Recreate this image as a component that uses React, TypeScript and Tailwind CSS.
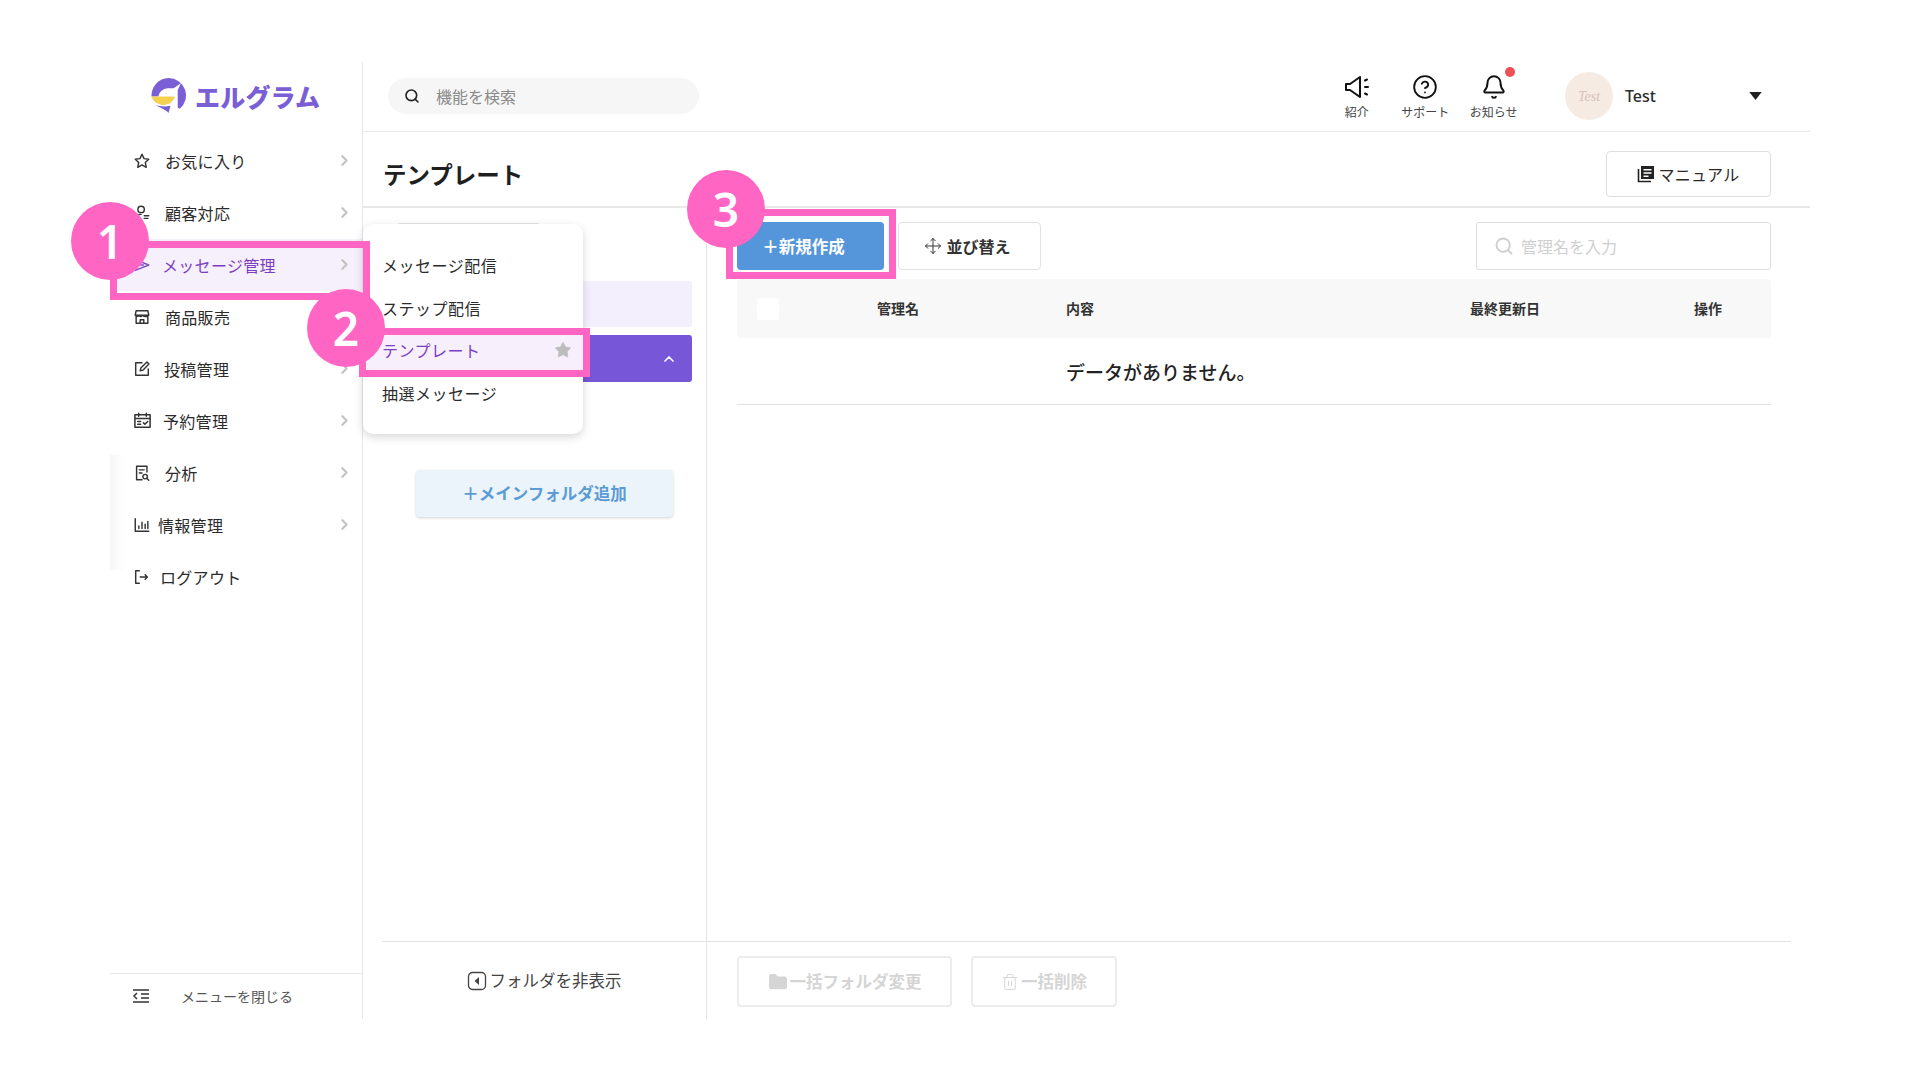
import React from "react";
import { ChevronRight, ChevronUp, Search, CircleHelp, Bell, Star, Move, Folder, Trash2 } from "lucide-react";

const P = { fill: "none", stroke: "currentColor", strokeWidth: 1.6, strokeLinecap: "round" as const, strokeLinejoin: "round" as const };

function Ic({ children, s = 18 }: { children: React.ReactNode; s?: number }) {
  return (
    <svg width={s} height={s} viewBox="0 0 20 20" {...P}>
      {children}
    </svg>
  );
}

const rows: { label: string; ml: string; icon: React.ReactNode; active?: boolean }[] = [
  { label: "お気に入り", ml: "ml-[13px]", icon: <Ic><path d="M10 2.500l2.300 4.900 5.200.7-3.800 3.600 1 5.300L10 14.400 5.300 17l1-5.300L2.500 8.100l5.200-.7z" /></Ic> },
  { label: "顧客対応", ml: "ml-[13px]", icon: <Ic><circle cx="9" cy="6" r="3.600" /><path d="M3.500 17c0-3.500 2.400-5.500 5.500-5.500M12.500 13h5M12.500 16h4" /></Ic> },
  { label: "メッセージ管理", ml: "ml-[10px]", active: true, icon: <Ic><path d="M2.500 4l15 6-15 6 3-6zM5.500 10h6" /></Ic> },
  { label: "商品販売", ml: "ml-[13px]", icon: <Ic><path d="M3.500 3h13l1 5h-15zM3.500 8v9h13V8M2.500 8c1 2 3 2 4 0 1 2 3 2 4 0 1 2 5 2 6.500 0M8 17v-4h4v4" /></Ic> },
  { label: "投稿管理", ml: "ml-[12px]", icon: <Ic><path d="M17 10v7H3V3h7M8 12l.7-3L15.500 2.300l2.200 2.200L11 11.300z" /></Ic> },
  { label: "予約管理", ml: "ml-[11px]", icon: <Ic s={19}><path d="M2 4h16v13H2zM6 2.500v3M14 2.500v3M2 8h16M5 11h3M5 14h3M11 12.500l1.500 1.500 3-3" /></Ic> },
  { label: "分析", ml: "ml-[13px]", icon: <Ic><path d="M15.500 9V2.500H4v15h6M7 6.500h5.500M7 10h3" /><circle cx="13.500" cy="14" r="2.500" /><path d="M15.500 16l2 2" /></Ic> },
  { label: "情報管理", ml: "ml-[6px]", icon: <Ic><path d="M2.500 3v14h15M6.500 14v-3M10 14V7M13.500 14v-5M16.500 14V6" /></Ic> },
  { label: "ログアウト", ml: "ml-[8px]", icon: <Ic><path d="M7 3H3v14h4M8 10h8M13.500 7.500L16 10l-2.500 2.500" /></Ic> },
];

function Num({ n, cls }: { n: string; cls: string }) {
  return (
    <div className={`absolute z-30 w-[78px] h-[78px] rounded-full bg-[#ff66c4] text-white flex items-center justify-center text-[46px] font-semibold font-['Noto_Sans',sans-serif] ${cls}`}>
      {n}
    </div>
  );
}

export default function App() {
  return (
    <div className="relative w-[1920px] h-[1080px] overflow-hidden bg-white pt-[62px] pl-[110px] text-[#2b2b2b] font-['Noto_Sans_CJK_JP','Noto_Sans',sans-serif]">
      <div className="flex h-[957px] w-[1700px]">
        {/* sidebar */}
        <aside className="w-[253px] shrink-0 border-r border-[#e8e8e8] flex flex-col">
          <div className="h-[72.700px] flex items-center pl-[40px] pb-[4px]">
            <svg width="38" height="38" viewBox="7 9 37 37">
              <path fill="#7a5ed6" d="M25 10a17 17 0 0 1 11 30l-2-1V22l3-7-7 5h-6a10 10 0 0 0-9 8H8.500A17 17 0 0 1 25 10z" />
              <path fill="#7a5ed6" d="M12 36c4 3 10 4 13 8l2-7c-5 1-11 1-15-1z" />
              <path fill="#f5cf4e" d="M8.500 28H31c-1 6-8 9-13 8-5-1-8.500-4-9.500-8z" />
            </svg>
            <span className="ml-[7px] text-[25px] font-black text-[#7a5ed6] tracking-[0.2px] leading-none">エルグラム</span>
          </div>
          <nav>
            {rows.map((r) => (
              <div key={r.label} className={`h-[52px] flex items-center pl-[22px] pr-[9px] text-[16px] tracking-[0.3px] ${r.active ? "bg-[#f6effc] text-[#7a3fc0]" : ""}`}>
                <span className={`w-[20px] flex justify-center ${r.active ? "text-[#7a4fc8]" : "text-[#333]"}`}>{r.icon}</span>
                <span className={r.ml}>{r.label}</span>
                {r.label !== "ログアウト" && <ChevronRight size={17} strokeWidth={3} className="ml-auto text-[#c2c2c2]" />}
              </div>
            ))}
          </nav>
          <div className="mt-auto h-[46.500px] border-t border-[#e8e8e8] flex items-center pl-[22px] text-[14px] text-[#555]">
            <svg width="18" height="14" viewBox="0 0 18 14" stroke="#333" strokeWidth="1.500" fill="none">
              <path d="M1 1h16M9 5h8M9 9h8M1 13h16M5 4L2 7l3 3" />
            </svg>
            <span className="ml-[31px]">メニューを閉じる</span>
          </div>
        </aside>

        {/* main */}
        <main className="flex-1 flex flex-col min-w-0">
          <header className="h-[70px] shrink-0 border-b border-[#e8e8e8] flex items-center pl-[25px] pr-[48px] pb-[1px]">
            <div className="w-[311px] h-[36px] rounded-full bg-[#f6f6f6] flex items-center pl-[16px] text-[16px] text-[#8a8a8a]">
              <Search size={16} strokeWidth={2.400} className="text-[#222]" />
              <span className="ml-[16px]">機能を検索</span>
            </div>
            <div className="ml-auto flex items-start">
              <div className="w-[68.500px] flex flex-col items-center text-[12px] text-[#444] leading-none">
                <svg width="28" height="26" viewBox="0 0 28 26" fill="none" stroke="#111" strokeWidth="2" strokeLinejoin="round" strokeLinecap="round">
                  <path d="M3 10v6h4l10 7V3L7 10zM22 6.500l2-1M22 13h3M22 19.500l2 1" />
                </svg>
                <span className="mt-[6px]">紹介</span>
              </div>
              <div className="w-[68.500px] flex flex-col items-center text-[12px] text-[#444] leading-none">
                <CircleHelp size={26} strokeWidth={1.700} className="text-[#111]" />
                <span className="mt-[6px]">サポート</span>
              </div>
              <div className="relative w-[68.500px] flex flex-col items-center text-[12px] text-[#444] leading-none">
                <Bell size={26} strokeWidth={1.800} className="text-[#111]" />
                <span className="mt-[6px]">お知らせ</span>
                <span className="absolute right-[13px] -top-[7px] w-[10px] h-[10px] rounded-full bg-[#ef4f55]" />
              </div>
            </div>
            <div className="ml-[37px] w-[197px] flex items-center">
              <div className="w-[48px] h-[48px] rounded-full bg-[#f5ebe2] flex items-center justify-center text-[14px] italic text-[#d9bfc0] font-['Liberation_Serif',serif]">Test</div>
              <span className="ml-[12px] text-[16px] font-medium font-['Noto_Sans',sans-serif]">Test</span>
              <svg className="ml-auto" width="13" height="8" viewBox="0 0 14 9"><path fill="#222" d="M0 0h14L7 9z" /></svg>
            </div>
          </header>

          <div className="h-[76px] shrink-0 border-b-2 border-[#e8e8e8] flex items-center pl-[20px] pr-[39px] pt-[9px]">
            <h1 className="mt-[3px] text-[23.500px] font-bold text-[#1f1f1f] leading-none">テンプレート</h1>
            <button className="ml-auto w-[165px] h-[46px] rounded-[4px] border border-[#dedede] flex items-center justify-center text-[16px] tracking-[0.3px]">
              <svg width="18" height="18" viewBox="0 0 18 18" fill="none" stroke="#222" strokeWidth="1.600" className="mr-[3px]">
                <path d="M1.500 4v12.500H14" />
                <path fill="#222" stroke="none" d="M4 1h13v13H4zm2.500 3v1.500h8V4zm0 3.200v1.500h8V7.200zm0 3.200v1.500h5v-1.500z" />
              </svg>
              マニュアル
            </button>
          </div>

          <div className="flex-1 flex min-h-0">
            {/* folder column */}
            <section className="w-[344px] shrink-0 border-r border-[#e4e4e4] flex flex-col">
              <div className="flex-1 pl-[19px] pr-[14px] pt-[15px]">
                <div className="ml-[14px] w-[145px] h-[48px] rounded-[4px] border border-[#e2e2e2]" />
                <div className="mt-[10px] h-[46px] rounded-[3px] bg-[#f4effc]" />
                <div className="mt-[8px] h-[47px] rounded-[3px] bg-[#7856d8] flex items-center justify-end pr-[15px] text-white">
                  <ChevronUp size={16} strokeWidth={2.500} />
                </div>
                <button className="mt-[88px] ml-[34px] w-[257px] h-[47px] rounded-[4px] bg-[#ecf4fb] shadow-[0_1px_3px_rgba(0,0,0,0.18)] text-[16.500px] font-bold text-[#5b9bd5]">
                  ＋メインフォルダ追加
                </button>
              </div>
              <div className="ml-[19px] h-[78px] shrink-0 border-t border-[#e2e2e2] flex items-center justify-center text-[16.500px] text-[#444]">
                <svg width="20" height="20" viewBox="0 0 20 20" fill="none" stroke="#444" strokeWidth="1.300" className="mr-[3px]">
                  <rect x="1.500" y="1.500" width="17" height="17" rx="4" />
                  <path fill="#444" stroke="none" d="M12 6v8L7.500 10z" />
                </svg>
                フォルダを非表示
              </div>
            </section>

            {/* list column */}
            <section className="flex-1 min-w-0 flex flex-col">
              <div className="flex-1 pl-[30px] pr-[39px] pt-[14px]">
                <div className="flex items-center">
                  <button className="w-[147px] h-[48px] pr-[14px] rounded-[4px] bg-[#5496d9] text-white text-[16.500px] font-bold">＋新規作成</button>
                  <button className="ml-[14px] w-[143px] h-[48px] pr-[4px] rounded-[4px] border border-[#e2e2e2] flex items-center justify-center text-[16px] font-bold text-[#333]">
                    <Move size={18} strokeWidth={1.300} className="mr-[4px]" />
                    並び替え
                  </button>
                  <div className="ml-auto w-[295px] h-[48px] rounded-[3px] border border-[#dedede] flex items-center pl-[17px] text-[16px] text-[#cfcfcf]">
                    <Search size={20} strokeWidth={2.200} className="text-[#cfcfcf]" />
                    <span className="ml-[7px]">管理名を入力</span>
                  </div>
                </div>
                <div className="mt-[9px] h-[59px] rounded-[4px] bg-[#f8f8f8] grid grid-cols-[140px_189px_404px_224px_1fr] items-center text-[14px] font-bold text-[#333]">
                  <span className="ml-[20px] w-[22px] h-[22px] rounded-[3px] bg-white" />
                  <span>管理名</span>
                  <span>内容</span>
                  <span>最終更新日</span>
                  <span>操作</span>
                </div>
                <div className="h-[67px] border-b border-[#e2e2e2] pl-[329px] pt-[3px] flex items-center text-[19px] font-medium text-[#222]">データがありません。</div>
              </div>
              <div className="mr-[19px] h-[78px] shrink-0 border-t border-[#e2e2e2] flex items-center pl-[30px] pt-[2px] text-[16.500px] font-bold text-[#d5d5d5]">
                <div className="w-[215px] h-[51px] rounded-[4px] border-2 border-[#ececec] flex items-center justify-center">
                  <Folder size={20} fill="#d5d5d5" strokeWidth={1.500} className="mr-[2px]" />一括フォルダ変更
                </div>
                <div className="ml-[19px] w-[146px] h-[51px] rounded-[4px] border-2 border-[#ececec] flex items-center justify-center">
                  <Trash2 size={18} strokeWidth={1.300} className="mr-[2px]" />一括削除
                </div>
              </div>
            </section>
          </div>
        </main>
      </div>

      {/* faint scroll shadow */}
      <div className="absolute left-[110px] top-[455px] w-[16px] h-[115px] bg-gradient-to-r from-[#f6f6f6] to-transparent" />

      {/* flyout menu */}
      <div className="absolute z-10 left-[363px] top-[224px] w-[220px] h-[210px] rounded-[10px] bg-white shadow-[0_3px_10px_rgba(0,0,0,0.16)] pt-[20px] text-[16px] tracking-[0.5px]">
        <div className="h-[42.500px] pl-[19px] flex items-center">メッセージ配信</div>
        <div className="h-[42.500px] pl-[19px] flex items-center">ステップ配信</div>
        <div className="h-[42.500px] pl-[19px] pr-[11px] flex items-center bg-[#f8effc] text-[#7a3fc0]">
          テンプレート
          <Star size={18} fill="#bdbdbd" strokeWidth={1} className="ml-auto text-[#bdbdbd]" />
        </div>
        <div className="h-[42.500px] pl-[19px] flex items-center">抽選メッセージ</div>
      </div>

      {/* annotations */}
      <div className="absolute z-20 left-[110px] top-[241px] w-[260px] h-[59px] border-[7px] border-[#ff66c4]" />
      <div className="absolute z-20 left-[359px] top-[328px] w-[231px] h-[49px] border-[7px] border-[#ff66c4]" />
      <div className="absolute z-20 left-[726px] top-[209px] w-[170px] h-[70px] border-[7px] border-[#ff66c4]" />
      <Num n="1" cls="left-[71px] top-[202px]" />
      <Num n="2" cls="left-[307px] top-[289px]" />
      <Num n="3" cls="left-[687px] top-[170px]" />
    </div>
  );
}
